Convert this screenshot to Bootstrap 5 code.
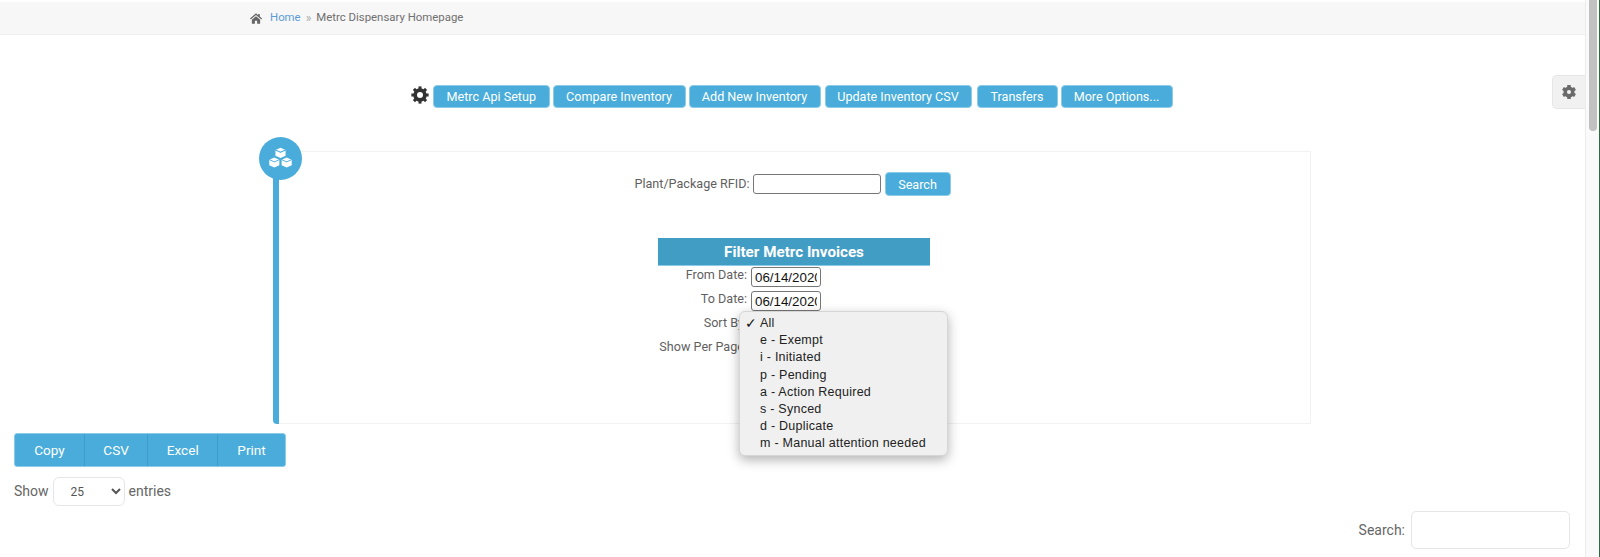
<!DOCTYPE html>
<html lang="en"><head><meta charset="utf-8"><title>Metrc Dispensary Homepage</title>
<link href="https://cdn.jsdelivr.net/npm/bootstrap@5.3.0/dist/css/bootstrap.min.css" rel="stylesheet">
<style>
html,body{height:557px;overflow:hidden}
body{font-family:Roboto,"Liberation Sans",sans-serif;font-size:12.6px;color:#5f5f5f;background:#fff}
.shell{height:557px}
.page-area{flex:1 1 auto;min-width:0;position:relative}
.scroll-track{width:15px;background:#fafafa;border-left:1px solid #ececec;border-right:1px solid #2f6b3c;padding:0 2px 0 3px}
.scroll-thumb{height:131px;background:#c1c1c1;border-radius:0 0 5px 5px}
.crumb-bar{margin-top:2px;height:33px;background:#f7f7f7;border-bottom:1px solid #eee;padding-left:250px;font-size:11.4px;color:#707070}
.crumb-bar a{color:#5d9cd8;text-decoration:none}
.crumb-sep{color:#aaa;margin:0 5px;font-size:12px}
.tool-row{margin-top:50px;height:23px;padding-left:411px}
.tool-btn,.search-btn{background:#49acda;border:1px solid #8ccbe8;color:#fff;font-size:12.6px;font-weight:400;border-radius:4px;height:23px;line-height:20px;padding:0;text-align:center}
.tool-btn:hover,.search-btn:hover{background:#49acda;color:#fff}
.w1{width:116.5px}.w2{width:133px;margin-left:3px}.w3{width:132px;margin-left:3px}.w4{width:147px;margin-left:4px}.w5{width:81px;margin-left:5px}.w6{width:112px;margin-left:3px}
.gear-ico{width:18px;height:18px;margin-right:4px;margin-top:-4px;fill:#333;stroke:#333}
.timeline{margin:43px 0 0 273px;width:1038px;height:273px;position:relative}
.time-line{width:6px;background:#49acda;border-radius:0 0 0 4px;flex:none}
.time-panel{flex:1 1 auto;border:1px solid #f2f2f2;border-left:0}
.time-dot{position:absolute;left:-14px;top:-14px;width:43px;height:43px;border-radius:50%;background:#49acda}
.rfid-row{margin-top:20px;height:24px;margin-left:-4px}
.rfid-row label{margin-right:3px}
.rfid-box{width:128px;height:20px;border:1px solid #767676;border-radius:3px;background:#fff;margin-right:4px}
.search-btn{width:66px;height:24px;line-height:21px}
.filter-wrap{width:272px;margin:42px 0 0 379px}
.filter-head{height:28px;background:#429dc5;color:#fff;font-size:15.2px;font-weight:700;line-height:28px;text-align:center;border-bottom:1px solid #8ccbe8}
.form-line{height:24px;width:272px}
.form-line label{width:89px;text-align:right;flex:none;margin-right:4px;line-height:18px}
.date-box{width:70px;height:20px;border:1px solid #767676;border-radius:3px;background:#fff;color:#111;font-size:13.33px;padding:0 3px;font-family:"Liberation Sans",sans-serif;margin-top:1px;outline:0}
.popup-list{position:absolute;left:466px;top:160px;width:209px;height:145px;background:#eff0ef;border:1px solid #d6d6d6;border-radius:6px;box-shadow:0 4px 12px rgba(0,0,0,.3);padding:3px 0;margin:0;list-style:none;font-family:"Liberation Sans",sans-serif;font-size:12.5px;letter-spacing:.25px;color:#222;z-index:5}
.popup-list li{height:17.2px;line-height:17px;padding-left:20px;position:relative;white-space:nowrap}
.check-mark{position:absolute;left:5px;top:0;font-size:14px;color:#111}
.dt-buttons{margin:9px 0 0 14px;width:272px;height:34px;background:#49acda;border:1px solid #8ccbe8;border-radius:3px;color:#fff;font-size:13.6px;font-weight:400}
.dt-buttons span{display:flex;align-items:center;justify-content:center;height:100%;border-right:1px solid #3f9cc8}
.dt-buttons span:last-child{border-right:0}
.dt-a{width:70px}.dt-b{width:63.500px}.dt-c{width:70px}.dt-d{width:67px}
.len-row{margin:10px 0 0 14px;font-size:14px;height:29px;color:#666}
.len-sel{width:72px;height:29px;border:1px solid #e6e6e6;border-radius:6px;margin:0 4px;padding:0 7px 0 13px;font-size:12px;color:#555}
.find-row{margin:5px 15px 0 0;font-size:14px;color:#666;height:38px}
.find-box{width:159px;height:38px;border:1px solid #e6e6e6;border-radius:5px;margin-left:6px;background:#fff}
.side-tab{position:absolute;right:0;top:75px;width:33px;height:34px;background:#f1f1f1;border:1px solid #e6e6e6;border-right:0;border-radius:5px 0 0 5px}
.side-tab svg{width:14px;height:14px;fill:#6a6a6a;stroke:#6a6a6a}
</style></head>
<body>
<div class="shell d-flex">
<div class="page-area">
  <div class="crumb-bar d-flex align-items-center">
    <svg width="12" height="11" viewBox="0 0 16 14" fill="#666" class="me-2"><path d="M8 0 0 7l1 1.200L8 2.300l7 5.900L16 7l-3-2.600V1h-2v1.700zM2.500 8.600V14h4v-4h3v4h4V8.600L8 4z"/></svg>
    <a href="#">Home</a><span class="crumb-sep">»</span><span>Metrc Dispensary Homepage</span>
  </div>
  <div class="tool-row d-flex align-items-center">
    <svg class="gear-ico" viewBox="0 0 24 24"><circle cx="12" cy="12" r="6.500" fill="none" stroke-width="5"/><g stroke="none"><rect x="10" y="0.500" width="4" height="5"/><rect x="10" y="18.500" width="4" height="5"/><rect x="0.500" y="10" width="5" height="4"/><rect x="18.500" y="10" width="5" height="4"/><rect x="10" y="0.500" width="4" height="5" transform="rotate(45 12 12)"/><rect x="10" y="18.500" width="4" height="5" transform="rotate(45 12 12)"/><rect x="0.500" y="10" width="5" height="4" transform="rotate(45 12 12)"/><rect x="18.500" y="10" width="5" height="4" transform="rotate(45 12 12)"/></g></svg>
    <button class="btn tool-btn w1">Metrc Api Setup</button>
    <button class="btn tool-btn w2">Compare Inventory</button>
    <button class="btn tool-btn w3">Add New Inventory</button>
    <button class="btn tool-btn w4">Update Inventory CSV</button>
    <button class="btn tool-btn w5">Transfers</button>
    <button class="btn tool-btn w6">More Options...</button>
  </div>
  <div class="timeline d-flex">
    <div class="time-line"></div>
    <div class="time-panel">
      <div class="rfid-row d-flex justify-content-center align-items-center">
        <label>Plant/Package RFID:</label><div class="rfid-box"></div><button class="btn search-btn">Search</button>
      </div>
      <div class="filter-wrap">
        <div class="filter-head">Filter Metrc Invoices</div>
        <div class="form-line d-flex"><label>From Date:</label><input class="date-box" value="06/14/2020" readonly aria-label="From Date"></div>
        <div class="form-line d-flex"><label>To Date:</label><input class="date-box" value="06/14/2020" readonly aria-label="To Date"></div>
        <div class="form-line d-flex"><label>Sort By:</label></div>
        <div class="form-line d-flex"><label>Show Per Page:</label></div>
      </div>
    </div>
    <svg class="time-dot p-2" viewBox="0 0 24 24" fill="#fff" stroke-linejoin="round"><path d="M12 2.500 7.500 4.500v5L12 11.500l4.500-2v-5zM6.500 11 2 13v5l4.500 2 4.500-2v-5zM17.500 11 13 13v5l4.500 2 4.500-2v-5z"/><path d="M7.500 4.500 12 6.500l4.500-2M2 13l4.500 2 4.500-2M13 13l4.500 2 4.500-2" fill="none" stroke="#49acda" stroke-width=".9"/></svg>
    <ul class="popup-list">
      <li><span class="check-mark">✓</span>All</li>
      <li>e - Exempt</li><li>i - Initiated</li><li>p - Pending</li><li>a - Action Required</li><li>s - Synced</li><li>d - Duplicate</li><li>m - Manual attention needed</li>
    </ul>
  </div>
  <div class="dt-buttons d-flex">
    <span class="dt-a">Copy</span><span class="dt-b">CSV</span><span class="dt-c">Excel</span><span class="dt-d">Print</span>
  </div>
  <div class="len-row d-flex align-items-center">
    Show <select class="len-sel bg-white" aria-label="Entries"><option>25</option></select> entries
  </div>
  <div class="find-row d-flex justify-content-end align-items-center">
    <label>Search:</label><input class="find-box" type="text" aria-label="Search">
  </div>
  <div class="side-tab d-flex align-items-center justify-content-center">
    <svg viewBox="0 0 24 24"><circle cx="12" cy="12" r="6.500" fill="none" stroke-width="6"/><g stroke="none"><rect x="9" y="0" width="6" height="6"/><rect x="9" y="18" width="6" height="6"/><rect x="9" y="0" width="6" height="6" transform="rotate(60 12 12)"/><rect x="9" y="18" width="6" height="6" transform="rotate(60 12 12)"/><rect x="9" y="0" width="6" height="6" transform="rotate(120 12 12)"/><rect x="9" y="18" width="6" height="6" transform="rotate(120 12 12)"/></g></svg>
  </div>
</div>
<div class="scroll-track flex-none"><div class="scroll-thumb"></div></div>
</div>
<script src="https://cdn.jsdelivr.net/npm/bootstrap@5.3.0/dist/js/bootstrap.bundle.min.js"></script>
</body></html>
